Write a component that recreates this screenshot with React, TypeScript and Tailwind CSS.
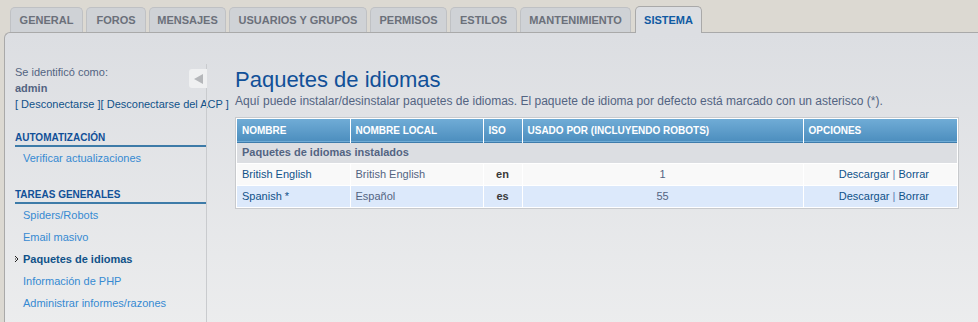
const TABS = [
  { label: 'GENERAL', w: 'w-[73px]' },
  { label: 'FOROS', w: 'w-[60px]' },
  { label: 'MENSAJES', w: 'w-[77px]' },
  { label: 'USUARIOS Y GRUPOS', w: 'w-[138px]' },
  { label: 'PERMISOS', w: 'w-[77px]' },
  { label: 'ESTILOS', w: 'w-[67px]' },
  { label: 'MANTENIMIENTO', w: 'w-[111px]' },
]

const MENU = [
  { label: 'Spiders/Robots' },
  { label: 'Email masivo' },
  { label: 'Paquetes de idiomas', active: true },
  { label: 'Información de PHP' },
  { label: 'Administrar informes/razones' },
]

const ROWS = [
  { name: 'British English', local: 'British English', iso: 'en', used: '1', bg: 'bg-[#f9f9f9]' },
  { name: 'Spanish *', local: 'Español', iso: 'es', used: '55', bg: 'bg-[#dce9fb]' },
]

function Tabs() {
  return (
    <div className="flex items-end gap-[3px] pl-[10px] h-[32px]">
      {TABS.map(t => (
        <div
          key={t.label}
          className={`${t.w} h-[25px] flex items-center justify-center border border-b-0 border-[#bfc1c4] rounded-t-[5px] bg-[#cfd2d6] text-[11px] font-bold text-[#6b707a] whitespace-nowrap`}
        >
          {t.label}
        </div>
      ))}
      <div className="relative z-10 -mb-px ml-px w-[67px] h-[27px] flex items-center justify-center border border-b-0 border-[#a9a9a9] rounded-t-[5px] bg-[#dcdee2] text-[11px] font-bold text-[#105aa3]">
        SISTEMA
      </div>
    </div>
  )
}

function Sidebar() {
  return (
    <div className="relative w-[202px] shrink-0 pt-[31px]">
      <div className="absolute right-0 top-[31px] bottom-0 w-px bg-[#c9cbce]" />
      <button className="absolute right-0 top-[36px] w-[18px] h-[19px] rounded-l-[3px] bg-[#eff0f1] flex items-center justify-center">
        <span className="block w-0 h-0 border-y-[5px] border-y-transparent border-r-[9px] border-r-[#b5b7ba]" />
      </button>
      <div className="pl-[10px] text-[11px] leading-[16px]">
        <div className="text-[#536482]">Se identificó como:</div>
        <div className="font-bold text-[#536482]">admin</div>
        <div className="whitespace-nowrap text-[#105289]">
          [ Desconectarse ][ Desconectarse del ACP ]
        </div>

        <div className="mt-[17px] h-[18px] flex items-start pt-px text-[10px] font-bold text-[#115098] border-b-2 border-[#3d7ba8]">
          AUTOMATIZACIÓN
        </div>
        <div className="h-[22px] flex items-center pl-[8px] text-[#368ad2]">Verificar actualizaciones</div>

        <div className="mt-[17px] h-[18px] flex items-start pt-px text-[10px] font-bold text-[#115098] border-b-2 border-[#3d7ba8]">
          TAREAS GENERALES
        </div>
        {MENU.map(m => (
          <div key={m.label} className="relative h-[22px] flex items-center pl-[8px]">
            {m.active && (
              <svg className="absolute left-0 top-[8px]" width="4" height="6" viewBox="0 0 4 6">
                <path d="M0 0h1v1H0zM1 1h1v1H1zM2 2h1v2H2zM1 4h1v1H1zM0 5h1v1H0z" fill="#222" />
                <path d="M0 2h1v2H0z" fill="#888" />
              </svg>
            )}
            <span className={m.active ? 'font-bold text-[#105289]' : 'text-[#368ad2]'}>{m.label}</span>
          </div>
        ))}
      </div>
    </div>
  )
}

function LangTable() {
  const th = 'h-[23px] px-[5px] text-left text-[10px] font-bold text-white border-r border-white last:border-r-0'
  const td = 'h-[22px] px-[5px] text-[11px] border-r border-white last:border-r-0'
  return (
    <div className="w-[724px] border border-[#c8cacd] bg-white p-px">
      <table className="w-full border-collapse">
        <thead>
          <tr className="bg-gradient-to-b from-[#70acd6] to-[#4d8fbf] border-b border-[#3f7cab]">
            <th className={`${th} w-[113px]`}>NOMBRE</th>
            <th className={`${th} w-[133px]`}>NOMBRE LOCAL</th>
            <th className={`${th} w-[39px]`}>ISO</th>
            <th className={`${th} w-[281px]`}>USADO POR (INCLUYENDO ROBOTS)</th>
            <th className={th}>OPCIONES</th>
          </tr>
        </thead>
        <tbody>
          <tr className="bg-[#dcdee2]">
            <td colSpan={5} className="h-[21px] px-[5px] text-[11px] font-bold text-[#536482]">
              Paquetes de idiomas instalados
            </td>
          </tr>
          {ROWS.map(r => (
            <tr key={r.iso} className={`${r.bg} border-t border-white`}>
              <td className={`${td} text-[#105289]`}>{r.name}</td>
              <td className={`${td} text-[#536482]`}>{r.local}</td>
              <td className={`${td} text-center font-bold text-[#3a3a3a]`}>{r.iso}</td>
              <td className={`${td} text-center text-[#536482]`}>{r.used}</td>
              <td className={`${td} text-right pr-[28px] text-[#105289]`}>
                Descargar <span className="text-[#5b7fb0]">|</span> Borrar
              </td>
            </tr>
          ))}
        </tbody>
      </table>
    </div>
  )
}

export default function App() {
  return (
    <div className="w-[978px] h-[322px] overflow-hidden bg-[#dcd9d2] font-['Liberation_Sans',Arial,sans-serif]">
      <Tabs />
      <div className="ml-[4px] w-[990px] h-[300px] flex border border-r-0 border-[#a9a9a9] rounded-tl-[6px] bg-gradient-to-b from-[#dcdee2] to-[#ecedee]">
        <Sidebar />
        <div className="pl-[28px] pt-[33px]">
          <h1 className="text-[22px] leading-[28px] text-[#115098] whitespace-nowrap">Paquetes de idiomas</h1>
          <p className="mt-[-1px] text-[12px] leading-[16px] text-[#536482] whitespace-nowrap">
            Aquí puede instalar/desinstalar paquetes de idiomas. El paquete de idioma por defecto está marcado con un asterisco (*).
          </p>
          <div className="mt-[8px]">
            <LangTable />
          </div>
        </div>
      </div>
    </div>
  )
}
